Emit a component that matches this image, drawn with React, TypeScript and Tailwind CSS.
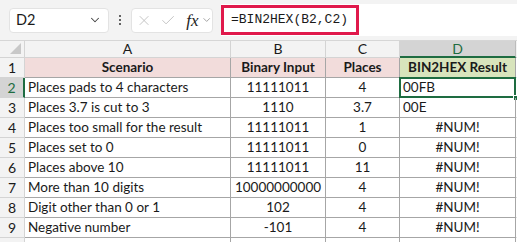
import { ChevronDown, X, Check } from 'lucide-react'

const rows = [
  { a: 'Places pads to 4 characters', b: '11111011', c: '4', d: '00FB', left: true },
  { a: 'Places 3.7 is cut to 3', b: '1110', c: '3.7', d: '00E', left: true },
  { a: 'Places too small for the result', b: '11111011', c: '1', d: '#NUM!' },
  { a: 'Places set to 0', b: '11111011', c: '0', d: '#NUM!' },
  { a: 'Places above 10', b: '11111011', c: '11', d: '#NUM!' },
  { a: 'More than 10 digits', b: '10000000000', c: '4', d: '#NUM!' },
  { a: 'Digit other than 0 or 1', b: '102', c: '4', d: '#NUM!' },
  { a: 'Negative number', b: '-101', c: '4', d: '#NUM!' },
]

const cols = 'grid grid-cols-[25px_206px_95px_74px_116px_1fr]'

const App = () => {
  return (
    <div className="w-[517px] h-[242px] overflow-hidden bg-white text-[#1a1a1a] font-['Lato','Liberation_Sans',sans-serif]">
      {/* Formula bar */}
      <div className="h-[41px] bg-[#f3f3f3] border-b border-[#d6d6d6] flex items-center pl-[9px]">
        <div className="w-[100px] h-[25px] bg-white rounded-[4px] border border-[#e3e3e3] flex items-center justify-between pl-[6px] pr-[6px] text-[14.5px]">
          <span>D2</span>
          <ChevronDown size={14} strokeWidth={1.8} className="text-[#444]" />
        </div>
        <div className="w-[22px] flex flex-col items-center gap-[2px]">
          <span className="w-[2px] h-[2px] bg-[#333] rounded-full" />
          <span className="w-[2px] h-[2px] bg-[#333] rounded-full" />
          <span className="w-[2px] h-[2px] bg-[#333] rounded-full" />
        </div>
        <div className="w-[82px] h-[25px] bg-white rounded-[4px] border border-[#e3e3e3] flex items-center pl-[4px] text-[#bdbdbd]">
          <X size={17} strokeWidth={1.3} />
          <Check size={17} strokeWidth={1.3} className="ml-[8px]" />
          <span className="ml-[10px] text-[#222] italic font-['Liberation_Serif',serif] text-[17px] leading-none">fx</span>
          <ChevronDown size={12} strokeWidth={1.6} className="ml-[2px] text-[#888]" />
        </div>
        <div className="ml-[8px] flex-1 h-[32px] bg-white flex items-center">
          <div className="w-[138px] h-[30px] border-[3px] border-[#e0194b] flex items-center pl-[7px] font-['Liberation_Mono',monospace] text-[13px] text-[#1a1a1a]">
            =BIN2HEX(B2,C2)
          </div>
        </div>
      </div>

      {/* Column headers */}
      <div className={`${cols} h-[17px] text-[14px] leading-none`}>
        <div className="bg-[#f3f3f3] border-r border-b border-[#d4d4d4] relative">
          <div className="absolute right-[3px] bottom-[3px] w-0 h-0 border-l-[11px] border-l-transparent border-b-[11px] border-b-[#c8c8c8]" />
        </div>
        {['A', 'B', 'C'].map((c) => (
          <div key={c} className="bg-[#f3f3f3] border-r border-b border-[#d4d4d4] flex items-center justify-center">
            {c}
          </div>
        ))}
        <div className="bg-[#d4d4d4] border-r border-[#bcbcbc] border-b-2 border-b-[#1e6c41] flex items-center justify-center text-[#1e6c41]">
          D
        </div>
        <div className="bg-[#f3f3f3] border-b border-[#d4d4d4]" />
      </div>

      {/* Header row 1 */}
      <div className={`${cols} h-[20px] text-[13.5px] leading-none`}>
        <div className="bg-[#f3f3f3] border-r border-b border-[#d4d4d4] flex items-center justify-center text-[14px]">1</div>
        <div className="bg-[#f2dcdb] border-r border-b border-[#a6a6a6] flex items-center justify-center font-bold">Scenario</div>
        <div className="bg-[#f2dcdb] border-r border-b border-[#a6a6a6] flex items-center justify-center font-bold">Binary Input</div>
        <div className="bg-[#f2dcdb] border-r border-b border-[#a6a6a6] flex items-center justify-center font-bold">Places</div>
        <div className="bg-[#d8e4bc] border-r border-b border-[#a6a6a6] flex items-center justify-center font-bold">BIN2HEX Result</div>
        <div className="border-b border-[#e1e1e1]" />
      </div>

      {rows.map((r, i) => {
        const sel = i === 0
        return (
          <div key={i} className={`${cols} h-[20px] text-[13.5px] leading-none`}>
            <div
              className={
                sel
                  ? 'bg-[#d4d4d4] border-r-2 border-r-[#1e6c41] border-b border-b-[#d4d4d4] flex items-center justify-center text-[#1e6c41] text-[14px]'
                  : 'bg-[#f3f3f3] border-r border-b border-[#d4d4d4] flex items-center justify-center text-[14px]'
              }
            >
              {i + 2}
            </div>
            <div className="border-r border-b border-[#a6a6a6] flex items-center pl-[3px] whitespace-nowrap">{r.a}</div>
            <div className="border-r border-b border-[#a6a6a6] flex items-center justify-center">{r.b}</div>
            <div className="border-r border-b border-[#a6a6a6] flex items-center justify-center">{r.c}</div>
            <div
              className={`relative border-r border-b border-[#a6a6a6] flex items-center ${r.left ? 'pl-[3px]' : 'justify-center'}`}
            >
              {r.d}
              {sel && (
                <>
                  <div className="absolute -left-[1px] -top-[1px] -right-[1px] -bottom-[1px] border-2 border-[#1e6c41]" />
                  <div className="absolute -right-[4px] -bottom-[4px] w-[6px] h-[6px] bg-[#1e6c41] border border-white" />
                </>
              )}
            </div>
            <div className="border-b border-[#e1e1e1]" />
          </div>
        )
      })}
      <div className={`${cols} h-[20px]`}>
        <div className="bg-[#f3f3f3] border-r border-[#d4d4d4]" />
        <div className="border-r border-[#a6a6a6]" />
        <div className="border-r border-[#a6a6a6]" />
        <div className="border-r border-[#a6a6a6]" />
        <div className="border-r border-[#a6a6a6]" />
        <div />
      </div>
    </div>
  )
}

export default App
